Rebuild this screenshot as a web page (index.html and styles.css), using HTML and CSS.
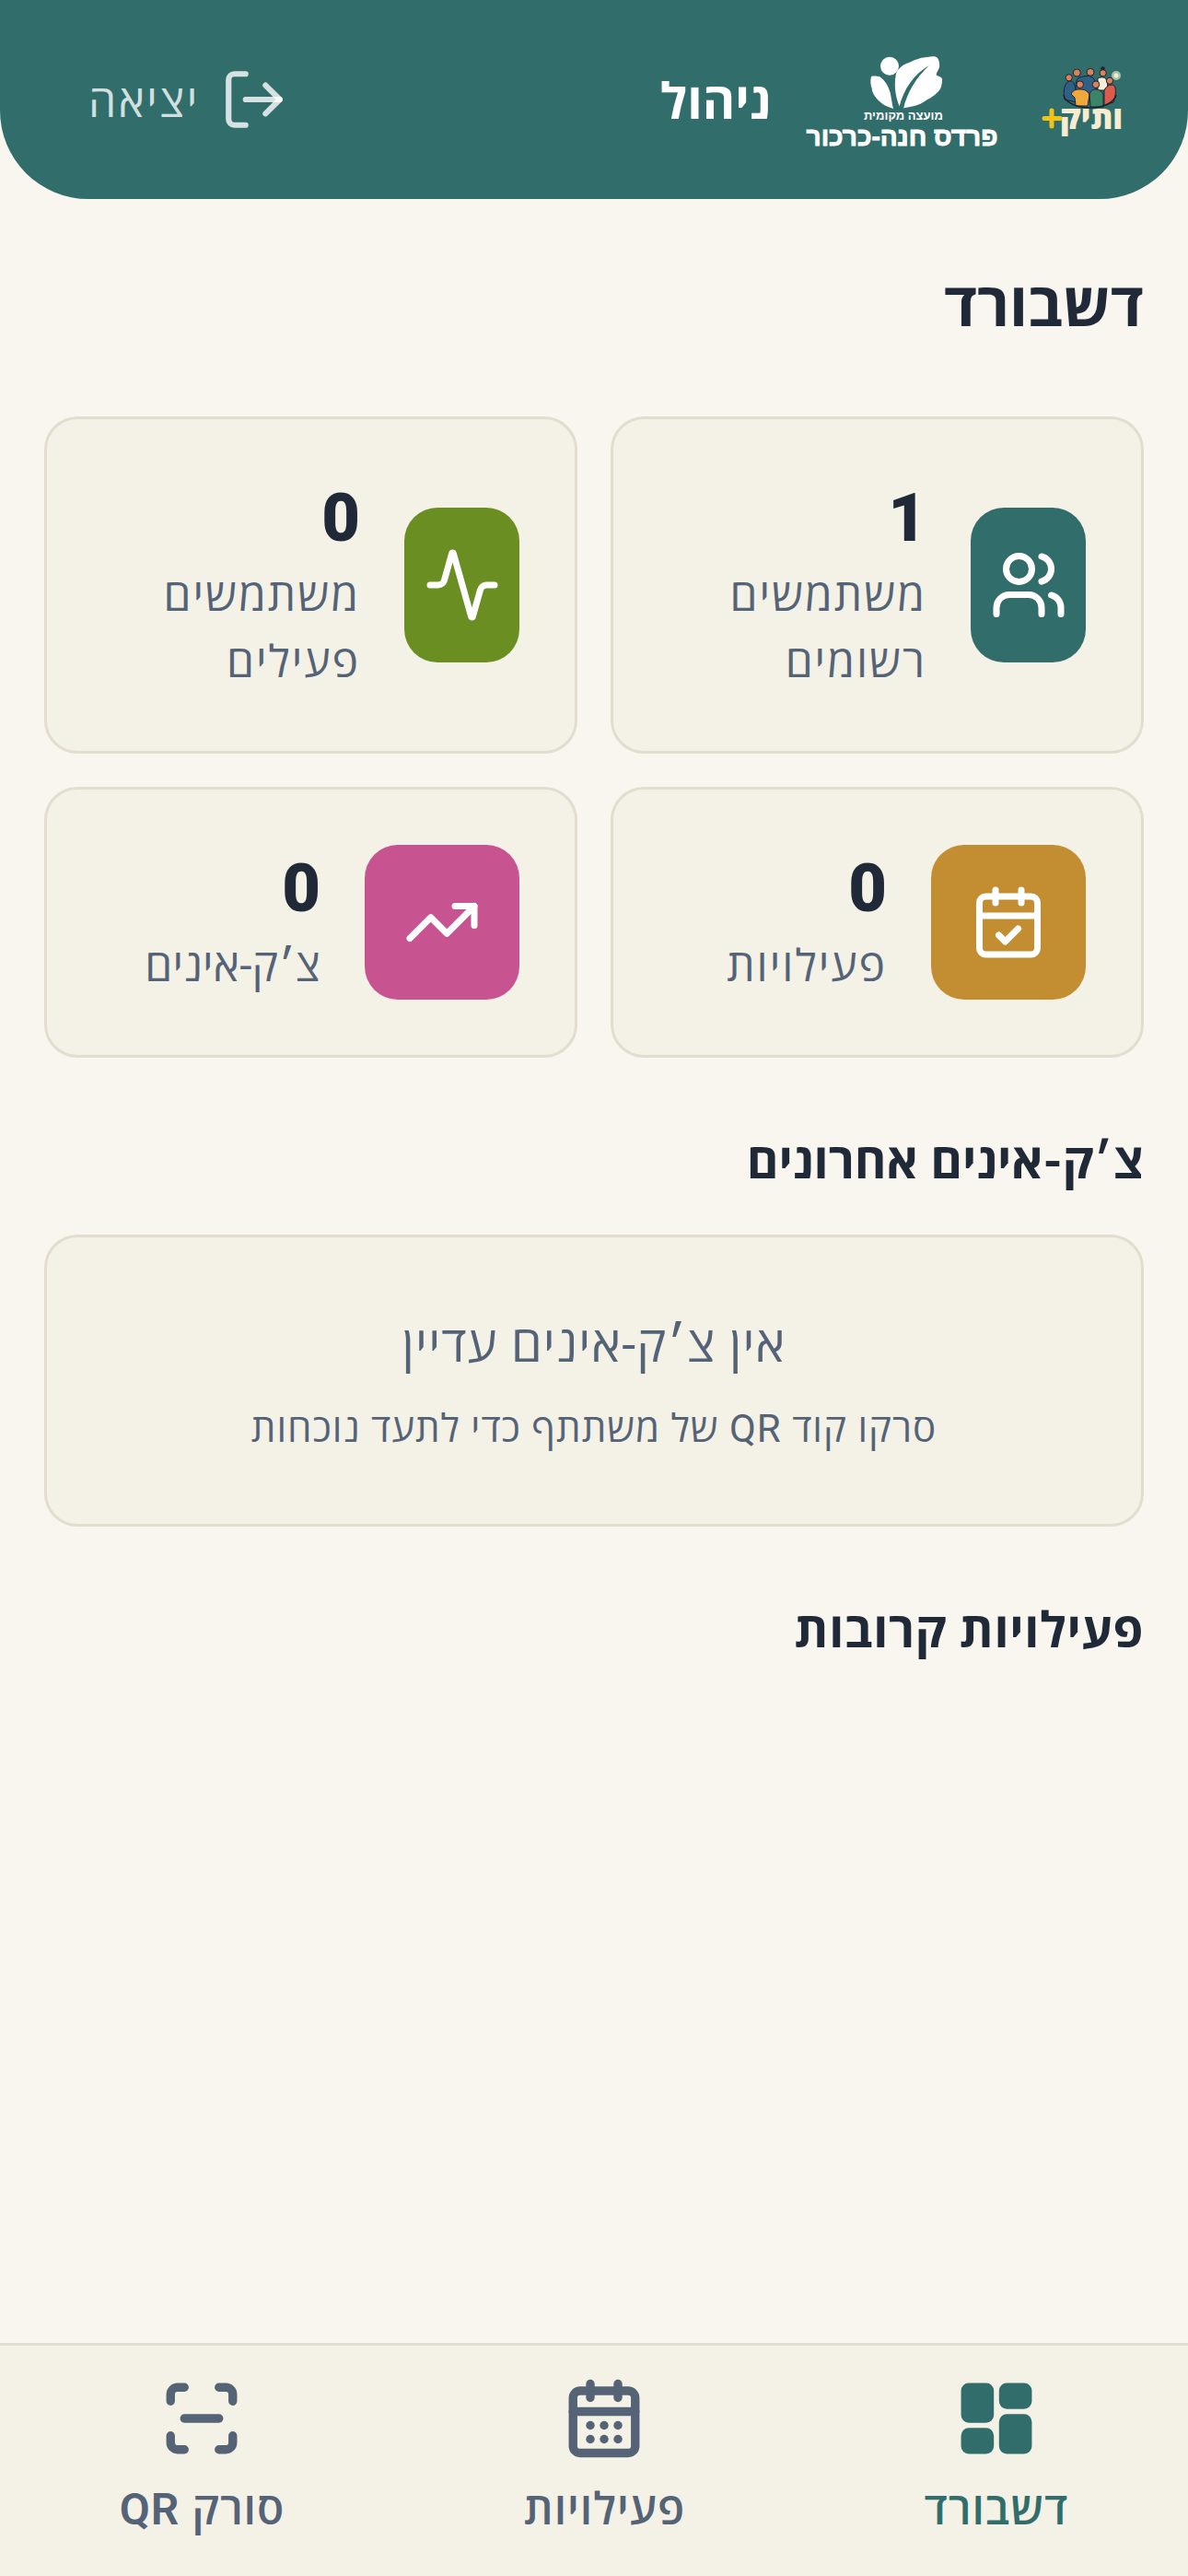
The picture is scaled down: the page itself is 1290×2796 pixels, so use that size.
FILE: index.html
```html
<!DOCTYPE html>
<html lang="he" dir="rtl">
  <head>
    <meta charset="UTF-8">
    <title>ניהול - דשבורד</title>
    <link rel="stylesheet" href="styles.css">
  </head>
  <body>
    <header class="topbar">
      <svg class="logo-vatik" viewBox="0 0 85 73" width="85" height="73">
        <circle cx="80" cy="10" r="5" fill="#a9c2a8"/>
        <circle cx="80" cy="10" r="2.5" fill="#f1efd2"/>
        <path d="M24 36c-2-9 0-18 5-20 4-1 6 3 7 8l1 15z" fill="#2f6187" stroke="#1c2430"/>
        <path d="M36 26c0-9 1-13 4-14 7-2 12-2 14 0 3 2 5 7 5 14l-8 8H40z" fill="#2f6187" stroke="#1c2430"/>
        <path d="M60 13c4-2 8-1 9 1 2 4 2 8 1 12h-10z" fill="#f4eeda" stroke="#1c2430"/>
        <path d="M67 26c3-6 8-7 11-5 2 3 2 10-1 18l-10 3z" fill="#dc5b4b" stroke="#1c2430"/>
        <path d="M31 30c3-5 6-5 10-5s8 1 10 6l-2 12H36l-1-9z" fill="#f0a73c" stroke="#1c2430"/>
        <path d="M51 31c1-5 4-6 7-6s7 2 8 6v13H52z" fill="#3b8468" stroke="#1c2430"/>
        <path d="M23 31c1 8 14 14 29 14s26-6 28-14" fill="none" stroke="#1c2430" stroke-width="1.6"/>
        <circle cx="65.5" cy="2.5" r="2.2" fill="#1c2430"/>
        <circle cx="28.7" cy="12.3" r="3.6" fill="#d9825b" stroke="#1c2430"/>
        <circle cx="37.3" cy="7" r="4" fill="#d9825b" stroke="#1c2430"/>
        <circle cx="52" cy="6.3" r="4" fill="#d9825b" stroke="#1c2430"/>
        <circle cx="65.7" cy="7.3" r="3.6" fill="#d9825b" stroke="#1c2430"/>
        <circle cx="73" cy="15.7" r="3.6" fill="#d9825b" stroke="#1c2430"/>
        <circle cx="40.7" cy="19.7" r="3.8" fill="#d9825b" stroke="#1c2430"/>
        <circle cx="58" cy="19.7" r="3.8" fill="#d9825b" stroke="#1c2430"/>
        <text x="53" y="68" text-anchor="middle">ותיק</text>
        <path d="M10 48v17M2 56.500h17" stroke="#f2c316" stroke-width="5" stroke-linecap="round" fill="none"/>
      </svg>
      <svg class="logo-city" viewBox="0 0 213 97" width="213" height="97">
        <circle cx="93" cy="11.700" r="10" fill="#fff"/>
        <path d="M105 58C100 48 97 34 100 20 103 13 108 10 114 8 120 5 128 2 134 2 139 1 144 1 145 3 148 7 147 13 147 13 146 17 143 19 144 22 148 23 151 25 150 27 150 33 148 37 147 38 142 44 138 46 134 48 128 52 124 54 120 55 112 57 105 58Z" fill="#fff"/>
        <path d="M136 11C120 20 108 36 103 58L108 58C112 40 122 24 136 11Z" fill="#316e6b"/>
        <path d="M73 23C77 22 80 23 82 23 88 27 92 34 94 42 95 48 96 54 97 58 90 56 85 53 82 50 76 45 73 37 74 37 72 32 72 27 73 23Z" fill="#fff"/>
        <text class="city-small" x="108" y="70" text-anchor="middle">מועצה מקומית</text>
        <text class="city-big" x="106.500" y="98" text-anchor="middle">פרדס חנה-כרכור</text>
      </svg>
      <div class="topbar-title">ניהול</div>
      <a class="logout">
        <svg class="icon" viewBox="0 0 24 24" width="74" height="74" fill="none" stroke="rgba(255,255,255,.8)" stroke-width="2" stroke-linecap="round" stroke-linejoin="round">
          <path d="M9 21H5a2 2 0 0 1-2-2V5a2 2 0 0 1 2-2h4"/>
          <polyline points="16 17 21 12 16 7"/>
          <line x1="21" y1="12" x2="9" y2="12"/>
        </svg>
        <span>יציאה</span>
      </a>
    </header>

    <main class="content">
      <h1>דשבורד</h1>

      <div class="stats">
        <div class="stat-card">
          <div class="stat-icon narrow teal">
            <svg viewBox="0 0 24 24" width="84" height="84" fill="none" stroke="#fff" stroke-width="2" stroke-linecap="round" stroke-linejoin="round">
              <path d="M16 21v-2a4 4 0 0 0-4-4H6a4 4 0 0 0-4 4v2"/>
              <circle cx="9" cy="7" r="4"/>
              <path d="M22 21v-2a4 4 0 0 0-3-3.870"/>
              <path d="M16 3.130a4 4 0 0 1 0 7.750"/>
            </svg>
          </div>
          <div class="stat-text">
            <div class="stat-num">1</div>
            <div class="stat-label">משתמשים רשומים</div>
          </div>
        </div>
        <div class="stat-card">
          <div class="stat-icon narrow green">
            <svg viewBox="0 0 24 24" width="84" height="84" fill="none" stroke="#fff" stroke-width="2" stroke-linecap="round" stroke-linejoin="round">
              <path d="M22 12h-2.480a2 2 0 0 0-1.930 1.460l-2.350 8.360a.250.250 0 0 1-.480 0L9.240 2.180a.250.250 0 0 0-.480 0l-2.350 8.360A2 2 0 0 1 4.490 12H2"/>
            </svg>
          </div>
          <div class="stat-text">
            <div class="stat-num">0</div>
            <div class="stat-label">משתמשים פעילים</div>
          </div>
        </div>
        <div class="stat-card">
          <div class="stat-icon gold">
            <svg viewBox="0 0 24 24" width="84" height="84" fill="none" stroke="#fff" stroke-width="2" stroke-linecap="round" stroke-linejoin="round">
              <path d="M8 2v4"/>
              <path d="M16 2v4"/>
              <rect x="3" y="4" width="18" height="18" rx="2"/>
              <path d="M3 10h18"/>
              <path d="m9 16 2 2 4-4"/>
            </svg>
          </div>
          <div class="stat-text">
            <div class="stat-num">0</div>
            <div class="stat-label">פעילויות</div>
          </div>
        </div>
        <div class="stat-card">
          <div class="stat-icon pink">
            <svg viewBox="0 0 24 24" width="84" height="84" fill="none" stroke="#fff" stroke-width="2" stroke-linecap="round" stroke-linejoin="round">
              <polyline points="22 7 13.500 15.500 8.500 10.500 2 17"/>
              <polyline points="16 7 22 7 22 13"/>
            </svg>
          </div>
          <div class="stat-text">
            <div class="stat-num">0</div>
            <div class="stat-label tight">צ׳ק-אינים</div>
          </div>
        </div>
      </div>

      <h2>צ׳ק-אינים אחרונים</h2>
      <div class="empty-card">
        <div class="empty-title">אין צ׳ק-אינים עדיין</div>
        <div class="empty-sub">סרקו קוד QR של משתתף כדי לתעד נוכחות</div>
      </div>

      <h2 class="upcoming">פעילויות קרובות</h2>
    </main>

    <nav class="bottom-nav">
      <a class="nav-item active">
        <svg viewBox="0 0 24 24" width="90" height="90" fill="#316e6b" stroke="#316e6b" stroke-width="2.500" stroke-linecap="round" stroke-linejoin="round">
          <rect x="3" y="3" width="7" height="9" rx="1"/>
          <rect x="14" y="3" width="7" height="5" rx="1"/>
          <rect x="14" y="12" width="7" height="9" rx="1"/>
          <rect x="3" y="16" width="7" height="5" rx="1"/>
        </svg>
        <span>דשבורד</span>
      </a>
      <a class="nav-item">
        <svg viewBox="0 0 24 24" width="90" height="90" fill="none" stroke="#556377" stroke-width="2.500" stroke-linecap="round" stroke-linejoin="round">
          <path d="M8 2v4"/>
          <path d="M16 2v4"/>
          <rect x="3" y="4" width="18" height="18" rx="2"/>
          <path d="M3 10h18"/>
          <path d="M8 14h.010"/>
          <path d="M12 14h.010"/>
          <path d="M16 14h.010"/>
          <path d="M8 18h.010"/>
          <path d="M12 18h.010"/>
          <path d="M16 18h.010"/>
        </svg>
        <span>פעילויות</span>
      </a>
      <a class="nav-item">
        <svg viewBox="0 0 24 24" width="90" height="90" fill="none" stroke="#556377" stroke-width="2.500" stroke-linecap="round" stroke-linejoin="round">
          <path d="M3 7V5a2 2 0 0 1 2-2h2"/>
          <path d="M17 3h2a2 2 0 0 1 2 2v2"/>
          <path d="M21 17v2a2 2 0 0 1-2 2h-2"/>
          <path d="M7 21H5a2 2 0 0 1-2-2v-2"/>
          <path d="M7 12h10"/>
        </svg>
        <span>סורק QR</span>
      </a>
    </nav>
  </body>
</html>
```

FILE: styles.css
```css
* {
	box-sizing: border-box;
}
html, body {
	margin: 0;
	padding: 0;
}
body {
	background: #f9f6ef;
	color: #1f2937;
	display: flex;
	flex-direction: column;
	font-family: Roboto, "Open Sans", "Liberation Sans", sans-serif;
	height: 2796px;
	overflow: hidden;
}
.topbar {
	align-items: center;
	background: #316e6b;
	border-radius: 0 0 96px 96px;
	color: #fff;
	display: flex;
	flex-shrink: 0;
	height: 216px;
	padding: 0 73px 0 72px;
}
.topbar svg {
	overflow: visible;
}
.logo-city {
	margin: 0 46px 0 36px;
}
.logo-vatik text {
	fill: #f7ecd0;
	font-size: 34px;
	font-weight: 800;
}
.logo-city text {
	fill: #fff;
	font-family: "Liberation Sans", sans-serif;
	font-weight: 700;
}
.city-small {
	font-size: 13px;
}
.logo-city .city-big {
	font-size: 28px;
	stroke: #fff;
	stroke-width: .9px;
}
.topbar-title {
	font-size: 54px;
	font-weight: 700;
}
.logout {
	align-items: center;
	color: rgba(255,255,255,.8);
	display: flex;
	font-size: 48px;
	font-weight: 500;
	gap: 22px;
	letter-spacing: 2.500px;
	margin-right: auto;
	padding: 24px;
}
.logout svg {
	display: block;
}
.content {
	flex: 1;
	padding: 68px 48px 0;
}
h1 {
	font-size: 66px;
	font-weight: 700;
	line-height: 96px;
	margin: 0 0 72px;
}
h2 {
	font-size: 53px;
	font-weight: 700;
	line-height: 72px;
	margin: 0 0 43px;
}
.stats {
	display: grid;
	gap: 36px;
	grid-template-columns: 1fr 1fr;
	margin-bottom: 77px;
}
.stat-card {
	align-items: center;
	background: #f4f1e6;
	border: 3px solid #e3ddd0;
	border-radius: 36px;
	display: flex;
	gap: 48px;
	padding: 60px;
}
.stat-icon {
	align-items: center;
	border-radius: 36px;
	display: flex;
	flex-shrink: 0;
	height: 168px;
	justify-content: center;
	width: 168px;
}
.stat-icon.narrow {
	width: 125px;
}
.teal { background: #316e6b; }
.green { background: #6b8e23; }
.gold { background: #c38e32; }
.pink { background: #c75490; }
.stat-num {
	font-size: 72px;
	font-weight: 900;
	line-height: 96px;
}
.stat-label {
	color: #556377;
	font-size: 48px;
	letter-spacing: 2px;
	line-height: 72px;
}
.stat-label.tight {
	letter-spacing: .2px;
}
.empty-card {
	background: #f4f1e6;
	border: 3px solid #e3ddd0;
	border-radius: 36px;
	padding: 72px;
	text-align: center;
}
.empty-title {
	color: #556377;
	font-size: 54px;
	letter-spacing: 1.100px;
	line-height: 90px;
	margin-bottom: 14px;
}
.empty-sub {
	color: #556377;
	font-size: 42px;
	letter-spacing: 1px;
	line-height: 63px;
}
.upcoming {
	letter-spacing: .6px;
	margin-top: 77px;
}
.bottom-nav {
	background: #f4f1e6;
	border-top: 3px solid #e3ddd0;
	display: flex;
	flex-shrink: 0;
	height: 253px;
	justify-content: space-around;
	padding-top: 34px;
}
.nav-item {
	align-items: center;
	color: #556377;
	display: flex;
	flex-direction: column;
	font-size: 48px;
	font-weight: 600;
	gap: 19px;
	letter-spacing: 1px;
}
.nav-item.active {
	color: #316e6b;
}
.nav-item svg {
	display: block;
}
```
